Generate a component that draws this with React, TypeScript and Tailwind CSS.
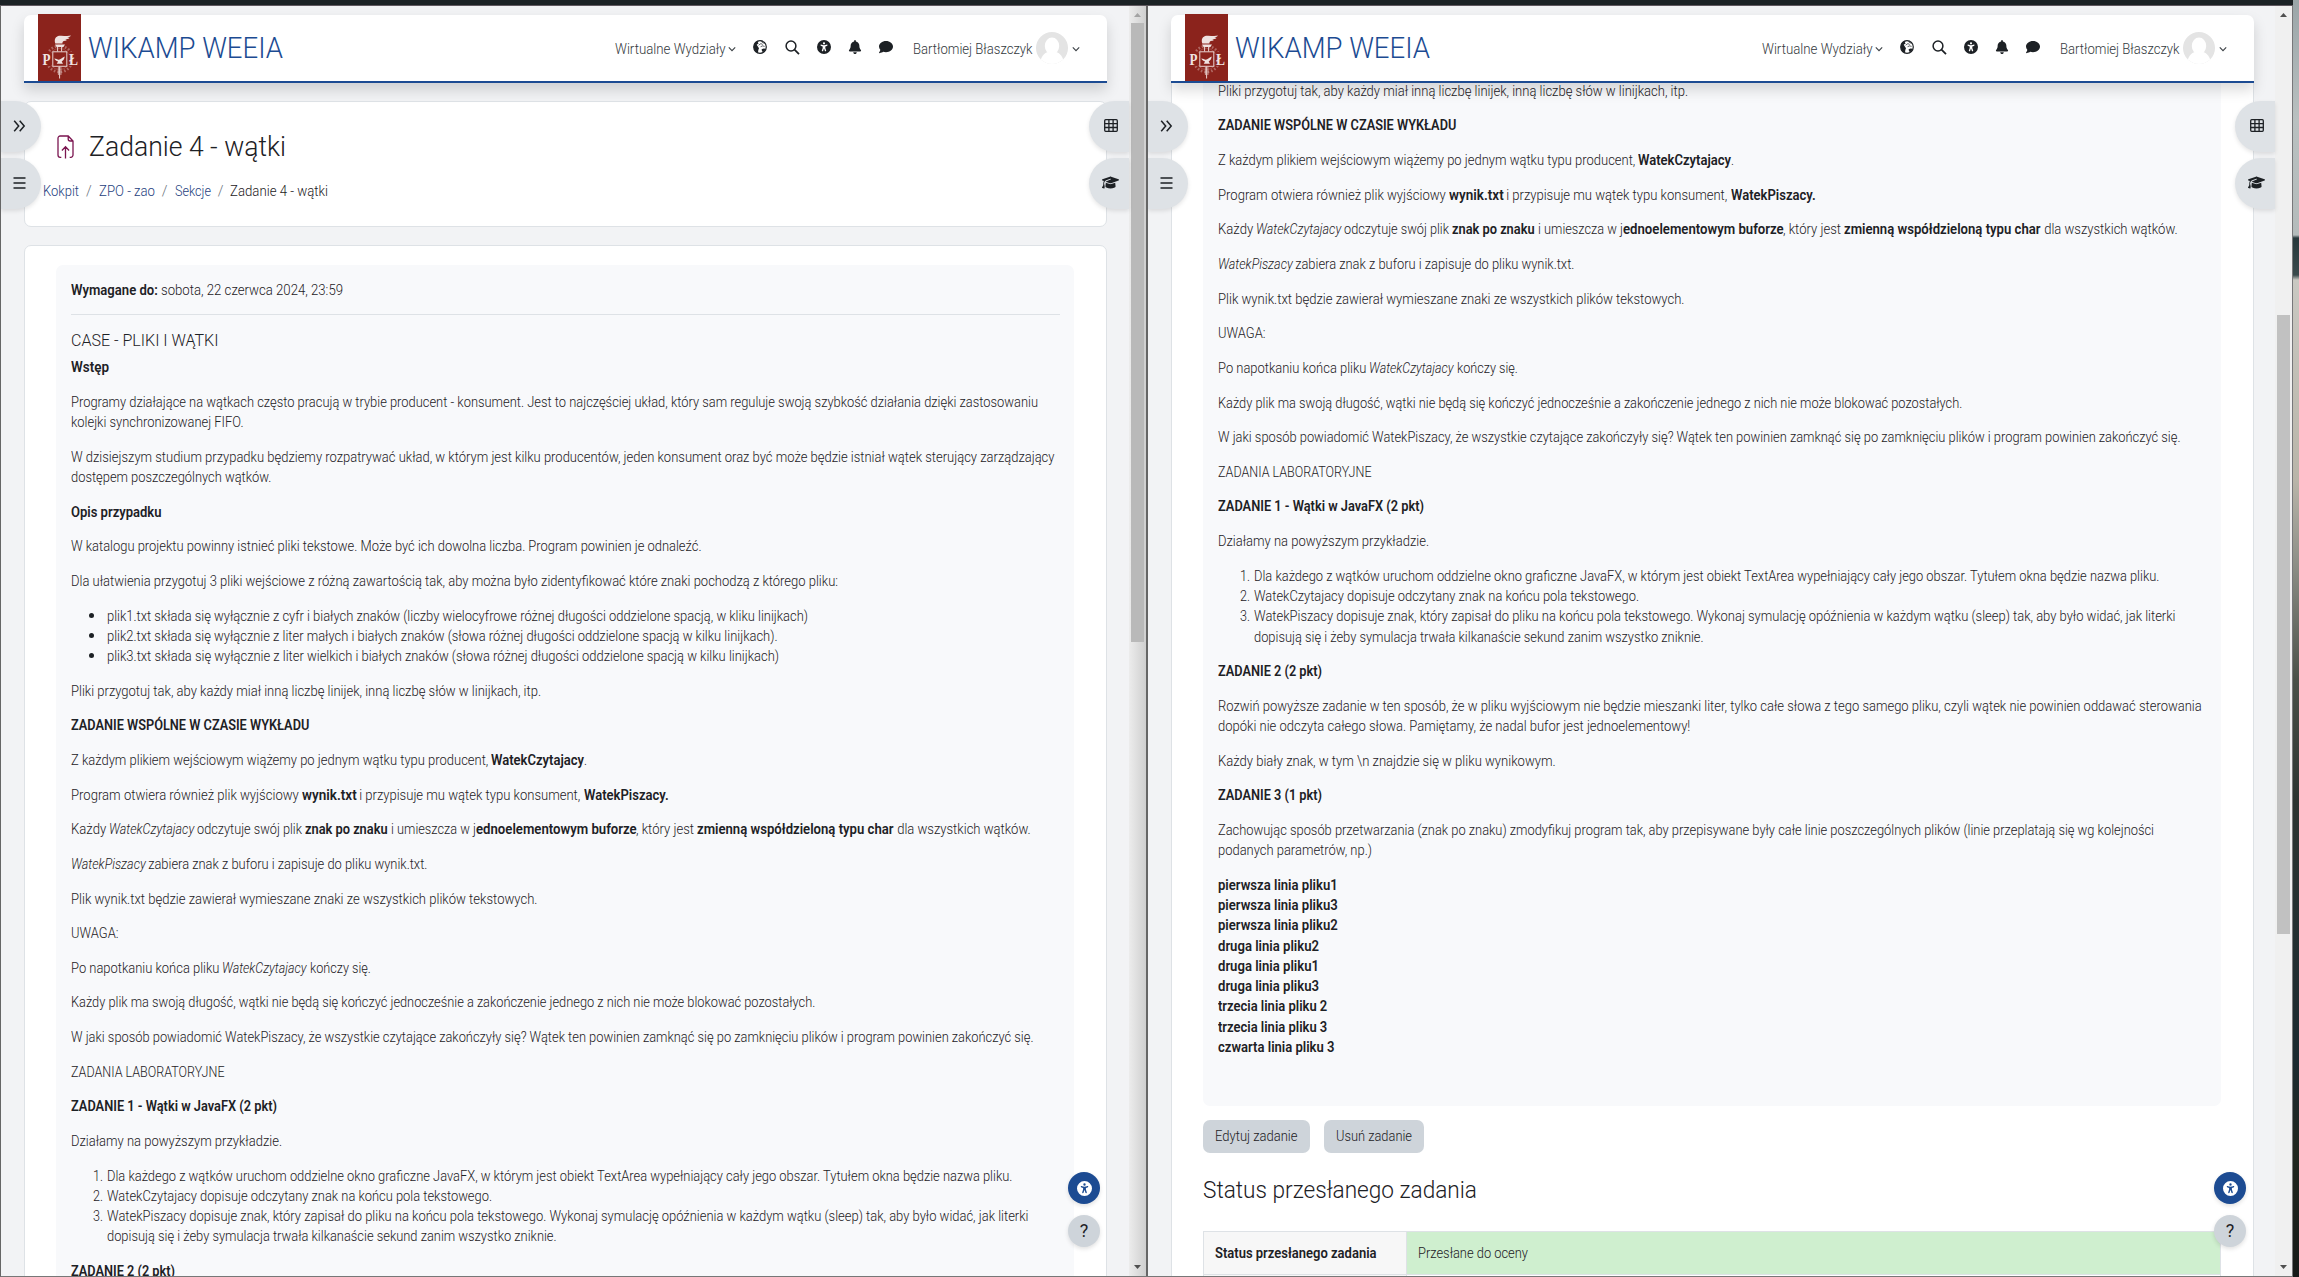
import { useLayoutEffect, useRef, useState, type ReactNode } from "react";
import { FaBell, FaComment, FaGraduationCap, FaUniversalAccess } from "react-icons/fa6";

type SegKind = "r" | "b" | "i";
type Seg = [text: string, width: number, kind?: SegKind];

const KIND: Record<SegKind, string> = {
  r: "font-[350]",
  b: "font-semibold",
  i: "font-[350] italic",
};

/* A run of text condensed (or widened) to an exact advance width. */
function Fit({ text, width, className = "" }: { text: string; width: number; className?: string }) {
  const ref = useRef<HTMLSpanElement>(null);
  const [scale, setScale] = useState(1);
  useLayoutEffect(() => {
    const el = ref.current;
    if (el && el.offsetWidth > 0) setScale((width / el.getBoundingClientRect().width) * currentScale(el));
  }, [text, width]);
  return (
    <span className="inline-block whitespace-pre align-top" style={{ width }}>
      <span ref={ref} className={"inline-block origin-left whitespace-pre align-top " + className} style={{ transform: `scaleX(${scale})` }}>
        {text}
      </span>
    </span>
  );
}

function currentScale(el: HTMLElement) {
  const t = getComputedStyle(el).transform;
  return t === "none" ? 1 : new DOMMatrix(t).a;
}

function Line({ segs }: { segs: Seg[] }) {
  return (
    <div className="flex h-[20.25px] whitespace-pre">
      {segs.map(([t, w, k = "r"], i) => (
        <Fit key={i} text={t} width={w} className={KIND[k]} />
      ))}
    </div>
  );
}

function P({ lines }: { lines: Seg[][] }) {
  return (
    <div className="mb-[14.4px]">
      {lines.map((l, i) => (
        <Line key={i} segs={l} />
      ))}
    </div>
  );
}

const INTRO: Seg[][][] = [
  [[["Wstęp", 38, "b"]]],
  [
    [["Programy działające na wątkach często pracują w trybie producent - konsument. Jest to najczęściej układ, który sam reguluje swoją szybkość działania dzięki zastosowaniu", 967]],
    [["kolejki synchronizowanej FIFO.", 172.5]],
  ],
  [
    [["W dzisiejszym studium przypadku będziemy rozpatrywać układ, w którym jest kilku producentów, jeden konsument oraz być może będzie istniał wątek sterujący zarządzający", 983.5]],
    [["dostępem poszczególnych wątków.", 200.3]],
  ],
  [[["Opis przypadku", 90.5, "b"]]],
  [[["W katalogu projektu powinny istnieć pliki tekstowe. Może być ich dowolna liczba. Program powinien je odnaleźć.", 630.5]]],
  [[["Dla ułatwienia przygotuj 3 pliki wejściowe z różną zawartością tak, aby można było zidentyfikować które znaki pochodzą z którego pliku:", 767]]],
];

const FILES: Seg[] = [
  ["plik1.txt składa się wyłącznie z cyfr i białych znaków (liczby wielocyfrowe różnej długości oddzielone spacją, w kliku linijkach)", 701],
  ["plik2.txt składa się wyłącznie z liter małych i białych znaków (słowa różnej długości oddzielone spacją w kilku linijkach).", 670.5],
  ["plik3.txt składa się wyłącznie z liter wielkich i białych znaków (słowa różnej długości oddzielone spacją w kilku linijkach)", 672],
];

const LECTURE: Seg[][][] = [
  [[["Pliki przygotuj tak, aby każdy miał inną liczbę linijek, inną liczbę słów w linijkach, itp.", 470]]],
  [[["ZADANIE WSPÓLNE W CZASIE WYKŁADU", 238.3, "b"]]],
  [[["Z każdym plikiem wejściowym wiążemy po jednym wątku typu producent, ", 420.5], ["WatekCzytajacy", 93, "b"], [".", 3]]],
  [[["Program otwiera również plik wyjściowy ", 231], ["wynik.txt", 54.7, "b"], [" i przypisuje mu wątek typu konsument, ", 227.5], ["WatekPiszacy.", 84.6, "b"]]],
  [[
    ["Każdy ", 38.4], ["WatekCzytajacy", 85.2, "i"], [" odczytuje swój plik ", 111], ["znak po znaku", 82.6, "b"],
    [" i umieszcza w j", 87.8], ["ednoelementowym buforze", 160.7, "b"], [", który jest ", 61.2],
    ["zmienną współdzieloną typu char", 196.5, "b"], [" dla wszystkich wątków.", 136.6],
  ]],
  [[["WatekPiszacy", 74.8, "i"], [" zabiera znak z buforu i zapisuje do pliku wynik.txt.", 282.4]]],
  [[["Plik wynik.txt będzie zawierał wymieszane znaki ze wszystkich plików tekstowych.", 466.5]]],
  [[["UWAGA:", 47.5]]],
  [[["Po napotkaniu końca pliku ", 151.6], ["WatekCzytajacy", 84.6, "i"], [" kończy się.", 63.8]]],
  [[["Każdy plik ma swoją długość, wątki nie będą się kończyć jednocześnie a zakończenie jednego z nich nie może blokować pozostałych.", 744.3]]],
  [[["W jaki sposób powiadomić WatekPiszacy, że wszystkie czytające zakończyły się? Wątek ten powinien zamknąć się po zamknięciu plików i program powinien zakończyć się.", 962.5]]],
  [[["ZADANIA LABORATORYJNE", 153.5]]],
  [[["ZADANIE 1 - Wątki w JavaFX (2 pkt)", 206, "b"]]],
  [[["Działamy na powyższym przykładzie.", 211]]],
];

const STEPS: Seg[][] = [
  [["Dla każdego z wątków uruchom oddzielne okno graficzne JavaFX, w którym jest obiekt TextArea wypełniający cały jego obszar. Tytułem okna będzie nazwa pliku.", 905.4]],
  [["WatekCzytajacy dopisuje odczytany znak na końcu pola tekstowego.", 385]],
  [
    ["WatekPiszacy dopisuje znak, który zapisał do pliku na końcu pola tekstowego. Wykonaj symulację opóźnienia w każdym wątku (sleep) tak, aby było widać, jak literki", 921.5],
    ["dopisują się i żeby symulacja trwała kilkanaście sekund zanim wszystko zniknie.", 449.6],
  ],
];

const TASKS: Seg[][][] = [
  [[["ZADANIE 2 (2 pkt)", 104, "b"]]],
  [
    [["Rozwiń powyższe zadanie w ten sposób, że w pliku wyjściowym nie będzie mieszanki liter, tylko całe słowa z tego samego pliku, czyli wątek nie powinien oddawać sterowania", 983.7]],
    [["dopóki nie odczyta całego słowa. Pamiętamy, że nadal bufor jest jednoelementowy!", 472.3]],
  ],
  [[["Każdy biały znak, w tym \\n znajdzie się w pliku wynikowym.", 337.7]]],
  [[["ZADANIE 3 (1 pkt)", 104, "b"]]],
  [
    [["Zachowując sposób przetwarzania (znak po znaku) zmodyfikuj program tak, aby przepisywane były całe linie poszczególnych plików (linie przeplatają się wg kolejności", 936]],
    [["podanych parametrów, np.)", 154]],
  ],
  [
    [["pierwsza linia pliku1", 119.7, "b"]],
    [["pierwsza linia pliku3", 119.7, "b"]],
    [["pierwsza linia pliku2", 119.7, "b"]],
    [["druga linia pliku2", 101, "b"]],
    [["druga linia pliku1", 101, "b"]],
    [["druga linia pliku3", 101, "b"]],
    [["trzecia linia pliku 2", 109.3, "b"]],
    [["trzecia linia pliku 3", 109.3, "b"]],
    [["czwarta linia pliku 3", 116.5, "b"]],
  ],
];

function Logo() {
  return (
    <svg className="h-[67px] w-[43px] shrink-0" viewBox="0 0 43 67">
      <rect width="43" height="67" fill="#8b231c" />
      <g fill="none" stroke="#e9d3d0">
        <circle cx="21.5" cy="45" r="13" strokeWidth="2.6" strokeDasharray="1.6 1.9" opacity=".4" />
        <circle cx="21.5" cy="45" r="10.6" strokeWidth=".6" opacity=".4" />
        <rect x="14.8" y="37.8" width="14" height="14.5" fill="#8b231c" strokeWidth="1" />
        <path d="M19.6 32v5.5M23.6 32v5.5M21.6 52.5v12" strokeWidth="1" />
        <path d="M20.4 53v8M22.9 53v8" strokeWidth=".7" />
      </g>
      <g fill="#efe2e0">
        <path d="M17 30.5h10l-1.6 2.4h-6.8zM17.3 29.4c-1.4-4 .3-7 4-7.6 3.5-.5 7.7.8 11.7-.3-1.2 1.5-2.6 1.9-4 2.1l2.5.5c-1.3 1.2-2.9 1.2-4.3 1.2l1.6.8c-1 .9-2.2.8-3.1.8-1 .4-1.3 1.3-1.3 2.5z" />
        <path d="M16.3 44.5c1.9 0 3 1.2 4.5 1.2 2 0 3-2.2 5.9-3.2-.2 2.3-1.2 3.9-3 4.9l1.3 2.3h-6.3l1.4-2.3c-2-.4-3.2-1.4-3.8-2.9z" />
      </g>
      <rect x="3.5" y="38" width="9.5" height="14" fill="#8b231c" />
      <rect x="30.5" y="38" width="10" height="14" fill="#8b231c" />
      <g fill="#f0e4e2" fontFamily="Liberation Serif, serif" fontWeight="700" fontSize="17">
        <text x="4.5" y="50.8" textLength="8" lengthAdjust="spacingAndGlyphs">P</text>
        <text x="31" y="50.8" textLength="9" lengthAdjust="spacingAndGlyphs">Ł</text>
      </g>
    </svg>
  );
}

function Chevron() {
  return (
    <svg className="h-[8px] w-[8px] shrink-0" viewBox="0 0 8 8" fill="none" stroke="#3c4146" strokeWidth="1.1">
      <path d="M.8 2.3 4 5.6l3.2-3.3" />
    </svg>
  );
}

function Globe() {
  return (
    <svg className="h-[14px] w-[14px]" viewBox="0 0 14 14">
      <circle cx="7" cy="7" r="6.3" fill="#fff" stroke="#1d2125" strokeWidth="1.2" />
      <path fill="#1d2125" d="M.8 6C1 3.2 3.2 1 5.600.8L4.800 2.400l.9.900-2 1.500 1 1.500 1.300 1.900-.7 1.700-.3 3C2.600 12.200.6 9.600.8 6z" />
      <path fill="#1d2125" d="M8.600 9.300l2-.8 2.100.2c-.4 1.500-1.400 2.800-2.700 3.500L9 10.900z" />
      <path d="M5.600 5.200 8 3.500l1.700 1.300M8.600 1.300l.9 1.400 2 .5M7.600 6.700l2.100-.8 1.900.5" stroke="#1d2125" strokeWidth=".7" fill="none" />
    </svg>
  );
}

function SearchIcon() {
  return (
    <svg className="h-[15px] w-[15px]" viewBox="0 0 15 15" fill="none" stroke="#1d2125" strokeWidth="1.5">
      <circle cx="6" cy="6" r="4.9" />
      <path d="m9.5 9.6 4.5 4.6" strokeWidth="1.7" />
    </svg>
  );
}

function Avatar() {
  return (
    <svg className="h-[32px] w-[32px] shrink-0" viewBox="0 0 32 32">
      <clipPath id="avatar-round">
        <circle cx="16" cy="16" r="16" />
      </clipPath>
      <g clipPath="url(#avatar-round)">
        <rect width="32" height="32" fill="#e4e4e4" />
        <ellipse cx="16" cy="14" rx="7.2" ry="8.5" fill="#fff" />
        <path d="M4 32c.5-7 4-11 8-12h8c4 1 7.5 5 8 12z" fill="#fff" />
      </g>
    </svg>
  );
}

function Header() {
  return (
    <header className="absolute top-[9px] left-[23px] z-20 flex h-[68px] w-[1083px] rounded-t-[7px] border-b-2 border-[#1c4b92] bg-white shadow-[0_7px_14px_rgba(0,0,0,0.15)]">
      <div className="-mt-px ml-[14px] h-[67px]">
        <Logo />
      </div>
      <div className="mt-[14px] ml-[6.5px] text-[29px] leading-[38px] text-[#1c4b92]">
        <Fit text="WIKAMP WEEIA" width={195} className="font-light" />
      </div>
      <div className="mt-[1px] mr-[27px] ml-auto flex items-center text-[14.8px] leading-[20px] text-[#343a40]">
        <Fit text="Wirtualne Wydziały" width={110.5} className="font-light" />
        <span className="ml-[3px]"><Chevron /></span>
        <div className="-mt-[3px] ml-[16.5px] flex items-center text-[#1d2125]">
          <span className="w-[14px]"><Globe /></span>
          <span className="ml-[18px] w-[15px]"><SearchIcon /></span>
          <FaUniversalAccess className="ml-[17px] h-[14px] w-[14px]" />
          <FaBell className="ml-[17.5px] h-[14px] w-[14px]" />
          <FaComment className="ml-[17px] h-[14px] w-[14px]" />
        </div>
        <span className="ml-[20px] flex"><Fit text="Bartłomiej Błaszczyk" width={119.5} className="font-light" /></span>
        <span className="-mt-[1px] ml-[3.5px]"><Avatar /></span>
        <span className="ml-[4px]"><Chevron /></span>
      </div>
    </header>
  );
}

function Drawer({ side, children, top }: { side: "l" | "r"; top: string; children: ReactNode }) {
  const place = side === "l" ? "left-0 rounded-r-full" : "right-[17px] rounded-l-full";
  const pad = side === "l" ? "pr-[3px]" : "pl-[3px]";
  return (
    <div className={`absolute z-10 flex h-[51px] w-[40px] items-center justify-center bg-[#dee2e6] pb-[2px] shadow-[0_2px_4px_rgba(0,0,0,0.1)] ${place} ${pad} ${top}`}>
      {children}
    </div>
  );
}

function Drawers() {
  return (
    <>
      <Drawer side="l" top="top-[95px]">
        <svg className="h-[12px] w-[13px]" viewBox="0 0 13 12" fill="none" stroke="#1d2125" strokeWidth="1.5">
          <path d="m1.2.7 4.5 5.3-4.5 5.3M6.7.7l4.5 5.3-4.5 5.3" />
        </svg>
      </Drawer>
      <Drawer side="l" top="top-[152px]">
        <svg className="h-[12px] w-[13px]" viewBox="0 0 13 12" stroke="#1d2125" strokeWidth="1.5">
          <path d="M.5 1h12M.5 6h12M.5 11h12" />
        </svg>
      </Drawer>
      <Drawer side="r" top="top-[95px]">
        <svg className="h-[13px] w-[14px]" viewBox="0 0 14 13" fill="none" stroke="#1d2125" strokeWidth="1.3">
          <rect x=".7" y=".7" width="12.6" height="11.6" rx="1" />
          <path d="M.7 4.6h12.6M.7 8.5h12.6M4.900.7v11.600M9.100.7v11.600" />
        </svg>
      </Drawer>
      <Drawer side="r" top="top-[152px]">
        <FaGraduationCap className="h-[15px] w-[17px] text-[#1d2125]" />
      </Drawer>
    </>
  );
}

function Floating() {
  return (
    <div className="absolute right-[46px] bottom-[29px] z-10 flex flex-col gap-[11px]">
      <div className="flex size-8 items-center justify-center rounded-full bg-[#1c4b92] shadow-[0_2px_4px_rgba(0,0,0,0.12)]">
        <FaUniversalAccess className="size-[15px] text-white" />
      </div>
      <div className="flex size-8 items-center justify-center rounded-full bg-[#ced4da] text-[18px] text-[#1d2125] shadow-[0_2px_4px_rgba(0,0,0,0.12)]">?</div>
    </div>
  );
}

function Arrow({ up, dim }: { up?: boolean; dim?: boolean }) {
  return (
    <svg className="h-[17px] w-[17px] shrink-0" viewBox="0 0 17 17" fill={dim ? "#a3a3a3" : "#505050"}>
      <path d={up ? "M5 11h7L8.5 7z" : "M5 6h7l-3.5 4z"} />
    </svg>
  );
}

function Scrollbar({ first }: { first?: boolean }) {
  return (
    <div className={"absolute inset-y-0 right-0 flex w-[17px] flex-col justify-between " + (first ? "bg-linear-to-r from-[#ececec] to-[#cfcfcf]" : "bg-[#f0f0f0]")}>
      <Arrow up dim={first} />
      <div className={"absolute right-[2px] w-[13px] " + (first ? "top-[17px] h-[619px] bg-[#b9b9b9]" : "top-[309px] h-[619px] bg-[#c1c1c1]")} />
      <Arrow />
    </div>
  );
}

function Crumb({ text, width, active }: { text: string; width: number; active?: boolean }) {
  return (
    <>
      <Fit text={text} width={width} className={active ? "font-[350] text-[#1d2125]" : "font-[350] text-[#1f3f80]"} />
      {!active && <span className="w-[19.8px] text-center font-light text-[#6a737b]">/</span>}
    </>
  );
}

function TitleCard() {
  return (
    <section className="h-[126px] rounded-[7px] border border-[#dee2e6] bg-white">
      <div className="mt-[27px] ml-[32px] flex items-center">
        <svg className="h-[24px] w-[17px]" viewBox="0 0 17 24" fill="none" stroke="#7b1550" strokeWidth="1.3">
          <path d="M4.300 22.300H3.200A2.200 2.200 0 0 1 1 20.100V3.200A2.200 2.200 0 0 1 3.200 1h8L16 6v14.100a2.200 2.200 0 0 1-2.200 2.200h-1.100M11.200 1v3a2 2 0 0 0 2 2H16M8.500 23.400V12M4.900 15.500l3.600-3.700 3.600 3.700" />
        </svg>
        <h1 className="ml-[15px] flex text-[27.5px] leading-[36px] text-[#1d2125]">
          <Fit text="Zadanie 4 - wątki" width={197} className="font-light" />
        </h1>
      </div>
      <nav className="mt-[17px] ml-[18px] flex text-[14.4px] leading-[20px]">
        <Crumb text="Kokpit" width={36} />
        <Crumb text="ZPO - zao" width={56} />
        <Crumb text="Sekcje" width={36} />
        <Crumb text="Zadanie 4 - wątki" width={98} active />
      </nav>
    </section>
  );
}

function GreyButton({ text, width }: { text: string; width: number }) {
  return (
    <div className="flex h-[33px] items-center rounded-[7px] bg-[#ced4da] px-[12px] text-[#1d2125]">
      <Fit text={text} width={width} className="font-[350]" />
    </div>
  );
}

function Lead() {
  return (
    <>
      <Line segs={[["Wymagane do: ", 90, "b"], ["sobota, 22 czerwca 2024, 23:59", 182]]} />
      <div className="my-[14.4px] h-px bg-[#dee2e6]" />
      <div className="mb-[8px] flex h-[19.4px] text-[17px] leading-[20.4px]">
        <Fit text="CASE - PLIKI I WĄTKI" width={147.5} className="font-light" />
      </div>
      {INTRO.map((p, i) => <P key={i} lines={p} />)}
      <ul className="mb-[14.4px] pl-[36px]">
        {FILES.map((f) => (
          <li key={f[0]} className="relative">
            <span className="absolute top-[7px] -left-[18px] size-[5px] rounded-full bg-[#1d2125]" />
            <Line segs={[f]} />
          </li>
        ))}
      </ul>
    </>
  );
}

function Submission() {
  return (
    <>
      <div className="mt-[14px] flex gap-[14.5px]">
        <GreyButton text="Edytuj zadanie" width={82.5} />
        <GreyButton text="Usuń zadanie" width={76} />
      </div>
      <h2 className="mt-[20px] flex h-[34px] text-[24.5px] leading-[34px]">
        <Fit text="Status przesłanego zadania" width={274} className="font-light" />
      </h2>
      <div className="mt-[24px] grid grid-cols-[203px_1fr] border border-[#dee2e6]">
        <div className="flex h-[43px] items-center border-r border-b border-[#dee2e6] bg-[#f7f7f7] pt-[1px] pl-[11px]">
          <Fit text="Status przesłanego zadania" width={161.5} className="font-semibold" />
        </div>
        <div className="flex h-[43px] items-center border-b border-[#dee2e6] bg-[#cfefcf] pt-[1px] pl-[10.5px]">
          <Fit text="Przesłane do oceny" width={110} className="font-[350]" />
        </div>
        <div className="h-[43px] border-r border-[#dee2e6] bg-[#f7f7f7]" />
        <div className="h-[43px] bg-white" />
      </div>
    </>
  );
}

function Assignment({ scrolled }: { scrolled?: boolean }) {
  return (
    <section className="h-[1300px] rounded-[7px] border border-[#dee2e6] bg-white pt-[19px] pr-[32px] pl-[31px]">
      <div className={"rounded-[7px] bg-[#f8f9fb] pt-[14.8px] pr-[14px] pl-[14.6px] " + (scrolled ? "h-[1040px]" : "h-[1200px]")}>
        {!scrolled && <Lead />}
        {LECTURE.map((p, i) => <P key={i} lines={p} />)}
        <ol className="mb-[14.4px] pl-[22.5px]">
          {STEPS.map((s, i) => (
            <li key={i} className="flex">
              <span className="w-[13.5px]"><Fit text={`${i + 1}.`} width={10} className="font-[350]" /></span>
              <div>{s.map((seg) => <Line key={seg[0]} segs={[seg]} />)}</div>
            </li>
          ))}
        </ol>
        {(scrolled ? TASKS : TASKS.slice(0, 1)).map((p, i) => <P key={i} lines={p} />)}
      </div>
      {scrolled && <Submission />}
    </section>
  );
}

function Panel({ scrolled }: { scrolled?: boolean }) {
  return (
    <div className={"relative h-[1270px] shrink-0 overflow-hidden bg-[#f2f3f5] " + (scrolled ? "w-[1144px]" : "w-[1145px]")}>
      <Header />
      <Drawers />
      <main className={"ml-[23px] flex w-[1083px] flex-col gap-[18px] " + (scrolled ? "pt-[40px]" : "pt-[95px]")}>
        {!scrolled && <TitleCard />}
        <Assignment scrolled={scrolled} />
      </main>
      <Floating />
      <Scrollbar first={!scrolled} />
    </div>
  );
}

export default function App() {
  return (
    <div className="flex h-[1277px] w-[2299px] overflow-hidden bg-[#1a2023] font-[Roboto,sans-serif] text-[14px] leading-[20.25px] text-[#1d2125]">
      <div className="flex w-[2293px] shrink-0 flex-col">
        <div className="h-[5px] bg-[#1b2225]" />
        <div className="flex h-[1272px] border border-t-[#5f585f] border-r-[#77777a] border-b-[#777] border-l-[#666]">
          <Panel />
          <div className="w-[2px] shrink-0 bg-[#666]" />
          <Panel scrolled />
        </div>
      </div>
      <div className="h-full flex-1 bg-[linear-gradient(to_bottom,#9aa5a8_0px,#b9c0c0_120px,#b4bbbb_235px,#27383c_238px,#3a4a4c_275px,#c9c8c2_280px,#b9b5a9_480px,#8f9189_560px,#4a5048_680px,#2c3431_800px,#1b2a30_1060px,#20261f_1150px,#161a18_1277px)]" />
    </div>
  );
}
